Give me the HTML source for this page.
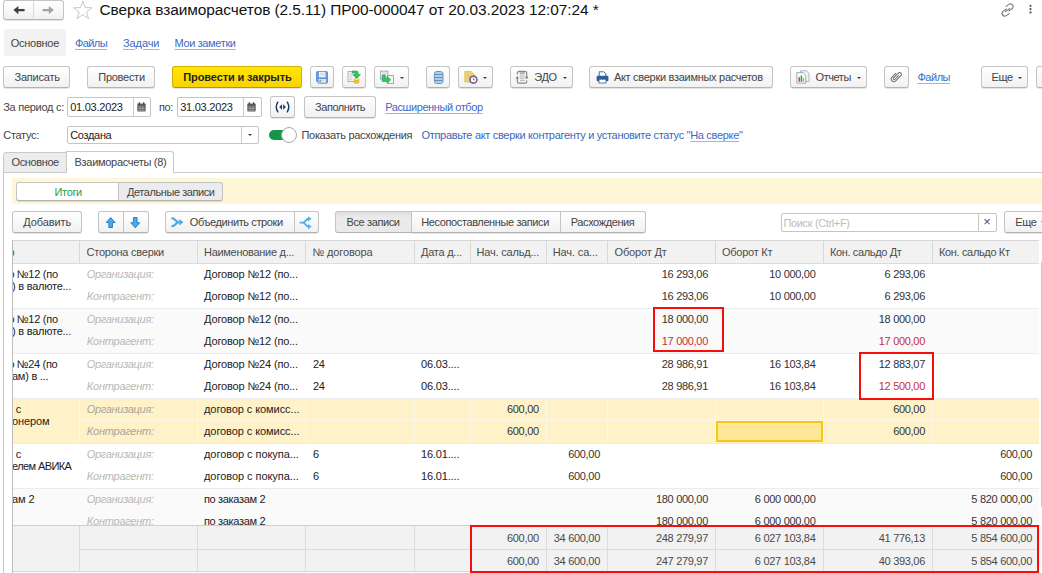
<!DOCTYPE html>
<html lang="ru"><head><meta charset="utf-8"><title>Сверка взаиморасчетов</title>
<style>
*{box-sizing:border-box;margin:0;padding:0}
html,body{width:1042px;height:573px;overflow:hidden;background:#fff}
body{position:relative;font-family:"Liberation Sans",sans-serif;font-size:11px;line-height:12px;color:#444;letter-spacing:-0.35px}
.a{position:absolute;white-space:nowrap}
.t{position:absolute;white-space:nowrap;height:12px}
.btn{position:absolute;height:22px;border:1px solid #c4c4c4;border-bottom-color:#b3b3b3;border-radius:3px;background:linear-gradient(#fff,#f1f1f1);box-shadow:0 1px 0 rgba(0,0,0,.10)}
.lnk{color:#3d6ac4;text-decoration:underline;text-decoration-color:rgba(61,106,196,.5);text-decoration-thickness:1px;text-underline-offset:1.5px}
.inp{position:absolute;height:20px;border:1px solid #c4c4c4;border-radius:2px;background:#fff}
.n{position:absolute;white-space:nowrap;height:12px;text-align:right;width:120px;letter-spacing:-0.3px;color:#333}
.it{font-style:italic;color:#b8b8b8}
.red{color:#c8303a}
.ft{color:#4a4a4a}
.dk{color:#222}
.hd{color:#4c4c4c}
.tri{position:absolute;width:0;height:0;border-style:solid;border-width:2px 2px 0 2px;border-color:#3a3a3a transparent transparent transparent}
.vl{position:absolute;width:1px;background:#e3e3e3}
.clip{position:absolute;overflow:hidden;height:12px;white-space:nowrap}
</style></head><body>
<div class="btn" style="left:3px;top:0px;width:61px;height:20px;"></div>
<div class="a" style="left:33px;top:1px;width:1px;height:18px;background:#d9d9d9"></div>
<svg class="a" style="left:3px;top:0px" width="62" height="21" viewBox="0 0 62 21"><path d="M10.4 10.1 L15.4 6 V9 H21.6 V11.2 H15.4 V14.2 Z" fill="#3f3f3f"/><path d="M50.8 10.1 L45.8 6 V9 H39.6 V11.2 H45.8 V14.2 Z" fill="#a3a3a3"/></svg>
<svg class="a" style="left:0;top:0" width="100" height="24"><polygon points="82.8,1.0 85.1,7.6 92.1,7.8 86.5,12.0 88.6,18.7 82.8,14.7 77.0,18.7 79.1,12.0 73.5,7.8 80.5,7.6" fill="#fff" stroke="#c2cad3" stroke-width="1"/></svg>
<div class="t " style="left:99.5px;top:-0.1px;font-size:15.4px;line-height:20px;height:20px;color:#111;letter-spacing:-0.05px">Сверка взаиморасчетов (2.5.11) ПР00-000047 от 20.03.2023 12:07:24 *</div>
<svg class="a" style="left:998px;top:0px" width="44" height="20" viewBox="0 0 44 20"><g fill="none" stroke="#777" stroke-width="1.1" stroke-linecap="round"><path d="M8.4 9 L5.3 11.1 a2.7 2.7 0 0 0 3 4.5 L11.2 13.6"/><path d="M9.4 11 L12.5 8.9 a2.7 2.7 0 0 0 -3 -4.5 L6.6 6.4" transform="translate(1.4,0)"/><path d="M7.4 11.6 L11.8 8.4"/></g><g fill="#555"><circle cx="32.5" cy="5.8" r="1.1"/><circle cx="32.5" cy="9.1" r="1.1"/><circle cx="32.5" cy="12.4" r="1.1"/></g></svg>
<div class="a" style="left:3.5px;top:29px;width:62.5px;height:27px;background:#f2f2f2;border-radius:3px"></div>
<div class="t " style="left:10.75px;top:36.5px;letter-spacing:-0.27px">Основное</div>
<div class="t lnk" style="left:75px;top:36.5px;letter-spacing:-0.60px">Файлы</div>
<div class="t lnk" style="left:123px;top:36.5px;letter-spacing:-0.09px">Задачи</div>
<div class="t lnk" style="left:174.5px;top:36.5px;letter-spacing:-0.36px">Мои заметки</div>
<div class="btn" style="left:3px;top:66px;width:67px;"></div>
<div class="t " style="left:14.5px;top:71px;letter-spacing:-0.22px">Записать</div>
<div class="btn" style="left:87px;top:66px;width:68px;"></div>
<div class="t " style="left:98.25px;top:71px;letter-spacing:-0.27px">Провести</div>
<div class="btn" style="left:172px;top:66px;width:130px;background:linear-gradient(#ffe600,#f8d300);border-color:#d4ad00;border-bottom-color:#b99600"></div>
<div class="t dk" style="left:183.25px;top:71px;font-weight:bold;letter-spacing:-0.11px">Провести и закрыть</div>
<div class="btn" style="left:310px;top:66px;width:24px;"></div>
<div class="btn" style="left:342px;top:66px;width:24px;"></div>
<div class="btn" style="left:374px;top:66px;width:35px;"></div>
<div class="btn" style="left:426px;top:66px;width:24px;"></div>
<div class="btn" style="left:458px;top:66px;width:35px;"></div>
<div class="btn" style="left:509.5px;top:66px;width:63px;"></div>
<div class="btn" style="left:589px;top:66px;width:184px;"></div>
<div class="btn" style="left:790px;top:66px;width:77px;"></div>
<div class="btn" style="left:884px;top:66px;width:25px;"></div>
<div class="btn" style="left:981px;top:66px;width:47px;"></div>
<div class="btn" style="left:1035.5px;top:66px;width:20px;"></div>
<svg class="a" style="left:316px;top:71px" width="12" height="13" viewBox="0 0 12 13"><path d="M1.6 0.5 h8.8 a1.2 1.2 0 0 1 1.2 1.2 v9.4 a1.2 1.2 0 0 1 -1.2 1.2 h-7.6 l-2.4 -2.2 v-8.4 a1.2 1.2 0 0 1 1.2 -1.2z" fill="#6397dc" stroke="#4c7fc4" stroke-width=".7"/><rect x="2.9" y="0.9" width="6.6" height="5.4" fill="#f2f6fb"/><path d="M3.8 2.4h4.8M3.8 4h4.8" stroke="#b7cbe6" stroke-width=".8"/><rect x="2.5" y="8" width="7.6" height="3.8" fill="#dfe3e8"/><rect x="3.4" y="8.8" width="1.8" height="2.4" fill="#93a1b3"/></svg>
<svg class="a" style="left:347px;top:70px" width="14" height="14" viewBox="0 0 14 14"><rect x="1" y="1.4" width="7.4" height="10.2" fill="#f4f6f8" stroke="#9aa6b4" stroke-width=".8"/><path d="M2.4 3.8h3M2.4 5.8h3.6M2.4 7.8h3M2.4 9.6h2.4" stroke="#b0bac6" stroke-width=".7"/><path d="M5.2 1 h4 q2 0 2 2 v1.6 h2.2 l-3.7 4 l-3.7 -4 h2.2 v-0.8 q0 -0.7 -0.7 -0.7 h-2.3z" fill="#2ec866" stroke="#1c9a48" stroke-width=".6" stroke-linejoin="round"/><path d="M7 9.6 v2.9 c0 1.4 5 1.4 5 0 v-2.9z" fill="#ecc43a" stroke="#cfa21c" stroke-width=".4"/><ellipse cx="9.5" cy="9.6" rx="2.5" ry="1" fill="#f9e58a" stroke="#cfa21c" stroke-width=".5"/></svg>
<svg class="a" style="left:380px;top:70px" width="14" height="14" viewBox="0 0 14 14"><rect x="0.5" y="1.1" width="7.4" height="8" fill="#eef1f5" stroke="#8f9bab" stroke-width=".8"/><path d="M2 3h4.4M2 4.8h4.4" stroke="#b8c2ce" stroke-width=".6"/><rect x="7.6" y="5.6" width="6" height="8" fill="#f7f9fb" stroke="#8f9bab" stroke-width=".8"/><path d="M2.2 5 h3 v3.2 h2 v-1.9 l3.4 3.5 l-3.4 3.5 v-1.9 h-5z" fill="#2ec866" stroke="#1c9a48" stroke-width=".6" stroke-linejoin="round"/></svg>
<div class="tri" style="left:399.5px;top:76.5px;"></div>
<svg class="a" style="left:433px;top:71px" width="11" height="13" viewBox="0 0 11 13"><rect x="1.4" y="0.5" width="8.6" height="12" rx="2.4" fill="#b3cfe8" stroke="#5f8db8" stroke-width=".9"/><path d="M1.6 3.5h8.2M1.6 6.5h8.2M1.6 9.5h8.2" stroke="#5f8db8" stroke-width="1"/></svg>
<svg class="a" style="left:464px;top:70px" width="14" height="14" viewBox="0 0 14 14"><path d="M0.8 1.4 h6.2 l3.4 3.2 v7.4 h-9.6z" fill="#efd57a" stroke="#dcb955" stroke-width=".8"/><path d="M2.4 4h3.4M2.4 6h4.4M2.4 8h3" stroke="#dfc060" stroke-width=".8"/><circle cx="9.4" cy="9.7" r="3.4" fill="#fff" stroke="#3a72c4" stroke-width="1.4"/><circle cx="9.4" cy="9.7" r="3.4" fill="none" stroke="#e0453a" stroke-width="1.4" stroke-dasharray="2.2 3.14" stroke-dashoffset="1.1"/><path d="M9.4 7.9 v1.9 h1.5" fill="none" stroke="#d9483b" stroke-width=".9"/></svg>
<div class="tri" style="left:483px;top:76.5px;"></div>
<svg class="a" style="left:515px;top:70px" width="14" height="15" viewBox="0 0 14 15"><g fill="none" stroke="#858585" stroke-width="1.2" stroke-linecap="round"><path d="M2.3 7.4 V11.4 Q2.3 13.2 4.2 13.2 H9.8 Q11.7 13.2 11.7 11.4 V10.8"/><path d="M11.7 7.6 V3.2 Q11.7 1.4 9.8 1.4 H4.2 Q2.3 1.4 2.3 3.2 V4"/></g><path d="M0.5 8.4 L2.3 6 L4.1 8.4z" fill="#808080"/><path d="M9.9 6.8 L11.7 9.2 L13.5 6.8z" fill="#808080"/><path d="M4.6 3.1h5.2" stroke="#9a9a9a" stroke-width="1.5"/><path d="M4.8 5.1h4.8M4.8 6.9h4.8M4.8 8.7h4.8M4.8 10.5h4.8" stroke="#a8a8a8" stroke-width=".8"/></svg>
<div class="t " style="left:534.3px;top:71px;letter-spacing:-0.35px">ЭДО</div>
<div class="tri" style="left:563px;top:76.5px;"></div>
<svg class="a" style="left:595.5px;top:71px" width="13" height="13" viewBox="0 0 13 13"><path d="M3.2 0.8 h4.6 l2 2 v3 h-6.6z" fill="#fff" stroke="#2f5f94" stroke-width=".9"/><rect x="0.6" y="4.8" width="11.8" height="5.4" rx="1.2" fill="#2f5f94"/><rect x="3" y="8.2" width="7" height="3.8" fill="#fff" stroke="#2f5f94" stroke-width=".8"/></svg>
<div class="t " style="left:613.9px;top:71px;letter-spacing:-0.29px">Акт сверки взаимных расчетов</div>
<svg class="a" style="left:796px;top:70px" width="15" height="14" viewBox="0 0 15 14"><path d="M4.4 0.8 h6 l2.6 2.6 v8 h-8.6z" fill="#f3f5f7" stroke="#9aa3ad" stroke-width=".8"/><path d="M0.8 2.6 h6.4 l2.6 2.6 v8 h-9z" fill="#fafbfc" stroke="#8f99a5" stroke-width=".8"/><rect x="2.4" y="7.2" width="1.6" height="4.6" fill="#d9483b"/><rect x="4.6" y="5.6" width="1.6" height="6.2" fill="#3aa54d"/><rect x="6.8" y="8.2" width="1.4" height="3.6" fill="#e0a030"/></svg>
<div class="t " style="left:815.5px;top:71px;letter-spacing:-0.43px">Отчеты</div>
<div class="tri" style="left:857px;top:76.5px;"></div>
<svg class="a" style="left:889px;top:70px" width="14" height="14" viewBox="0 0 14 14"><g transform="translate(7.2 6.7) rotate(45) scale(1.22) translate(-2.15 -5.3)" fill="none" stroke="#6a6a6a" stroke-width=".78" stroke-linecap="round"><path d="M2.9 3.4 V7.5 a0.8 0.8 0 0 1 -1.6 0 V2 a1.5 1.5 0 0 1 3 0 V8 a2.15 2.15 0 0 1 -4.3 0 V3.6"/></g></svg>
<div class="t lnk" style="left:917.5px;top:71px;letter-spacing:-0.49px">Файлы</div>
<div class="t " style="left:991.4px;top:71px;letter-spacing:-0.35px">Еще</div>
<div class="tri" style="left:1018px;top:76.5px;"></div>
<div class="t " style="left:3.25px;top:101px;letter-spacing:-0.28px">За период с:</div>
<div class="inp" style="left:67px;top:97px;width:84px;"></div>
<div class="t dk" style="left:70.25px;top:101px;letter-spacing:-0.26px">01.03.2023</div>
<div class="t " style="left:159px;top:101px;letter-spacing:-0.35px">по:</div>
<div class="inp" style="left:177px;top:97px;width:85px;"></div>
<div class="t dk" style="left:180.2px;top:101px;letter-spacing:-0.25px">31.03.2023</div>
<svg class="a" style="left:137px;top:102px" width="9" height="10" viewBox="0 0 9 10"><rect x="0.3" y="1.4" width="8.4" height="8" rx="1" fill="#5e5e5e"/><path d="M2.3 0.2v2.2M6.7 0.2v2.2" stroke="#444" stroke-width="1.2"/><path d="M1.6 5h5.8M1.6 6.6h5.8M1.6 8.2h5.8" stroke="#d5d5d5" stroke-width=".8" stroke-dasharray="1.1 .5"/></svg>
<svg class="a" style="left:247px;top:102px" width="9" height="10" viewBox="0 0 9 10"><rect x="0.3" y="1.4" width="8.4" height="8" rx="1" fill="#5e5e5e"/><path d="M2.3 0.2v2.2M6.7 0.2v2.2" stroke="#444" stroke-width="1.2"/><path d="M1.6 5h5.8M1.6 6.6h5.8M1.6 8.2h5.8" stroke="#d5d5d5" stroke-width=".8" stroke-dasharray="1.1 .5"/></svg>
<div class="a" style="left:133px;top:98px;width:1px;height:18px;background:#cdcdcd"></div>
<div class="a" style="left:243px;top:98px;width:1px;height:18px;background:#cdcdcd"></div>
<div class="btn" style="left:270px;top:96px;width:25px;"></div>
<svg class="a" style="left:270px;top:96px" width="25" height="22" viewBox="0 0 25 22"><g fill="none" stroke="#1f3f6e" stroke-width="1.5" stroke-linecap="round"><path d="M7.8 6.2 q-3 4.8 0 9.6"/><path d="M17.3 6.2 q3 4.8 0 9.6"/></g><path d="M12 8.3 L9.2 11 L12 13.7z M13.1 8.3 L15.9 11 L13.1 13.7z" fill="#1f3f6e"/></svg>
<div class="btn" style="left:304px;top:96px;width:72px;"></div>
<div class="t " style="left:315px;top:101px;letter-spacing:-0.44px">Заполнить</div>
<div class="t lnk" style="left:385.25px;top:101px;letter-spacing:-0.42px">Расширенный отбор</div>
<div class="t " style="left:3.25px;top:129px;letter-spacing:-0.31px">Статус:</div>
<div class="inp" style="left:67px;top:125.5px;width:192px;height:18px;"></div>
<div class="t dk" style="left:70.25px;top:129px;letter-spacing:-0.33px">Создана</div>
<div class="a" style="left:241px;top:126.5px;width:1px;height:16px;background:#cdcdcd"></div>
<div class="tri" style="left:247.5px;top:134px;"></div>
<div class="a" style="left:269px;top:130px;width:26px;height:10px;border-radius:5px;background:#14964a"></div>
<div class="a" style="left:281px;top:127px;width:16px;height:16px;border-radius:8px;background:#fff;border:1px solid #a9a9a9"></div>
<div class="t " style="left:301.5px;top:129px;letter-spacing:-0.32px">Показать расхождения</div>
<div class="t " style="left:421.5px;top:129px;color:#3a68c0;letter-spacing:-0.32px">Отправьте акт сверки контрагенту и установите статус "<span class="lnk">На сверке</span>"</div>
<div class="a" style="left:3px;top:172px;width:1045px;height:410px;border:1px solid #c9c9c9;border-right:0"></div>
<div class="a" style="left:3px;top:151.5px;width:64px;height:21.5px;border:1px solid #c9c9c9;border-radius:3px 0 0 0;background:#ececec"></div>
<div class="a" style="left:66px;top:151px;width:108px;height:22px;border:1px solid #c9c9c9;border-bottom:0;border-radius:0 3px 0 0;background:#fff"></div>
<div class="t " style="left:11.5px;top:155.5px;letter-spacing:-0.38px">Основное</div>
<div class="t " style="left:74.5px;top:155.5px;letter-spacing:-0.29px">Взаиморасчеты (8)</div>
<div class="a" style="left:12px;top:177.5px;width:1030px;height:26.5px;background:#fef7d7"></div>
<div class="btn" style="left:16px;top:182px;width:103px;height:19px;border-radius:3px 0 0 3px;background:#fff"></div>
<div class="btn" style="left:118px;top:182px;width:105px;height:19px;border-radius:0 3px 3px 0;background:#ececec"></div>
<div class="t " style="left:54.5px;top:185.5px;color:#22a052;letter-spacing:-0.34px">Итоги</div>
<div class="t " style="left:127px;top:185.5px;letter-spacing:-0.43px">Детальные записи</div>
<div class="btn" style="left:12px;top:211px;width:70px;"></div>
<div class="t " style="left:23.25px;top:216px;letter-spacing:-0.09px">Добавить</div>
<div class="btn" style="left:98px;top:211px;width:26px;border-radius:3px 0 0 3px"></div>
<div class="btn" style="left:123px;top:211px;width:26px;border-radius:0 3px 3px 0"></div>
<svg class="a" style="left:98px;top:211px" width="51" height="22" viewBox="0 0 51 22"><path d="M12.65 6.6 L17.1 11.5 H14.45 V16.5 H10.85 V11.5 H8.2z" fill="#45abf3" stroke="#1d78bc" stroke-width=".9" stroke-linejoin="round"/><path d="M37.25 16.8 L41.7 11.8 H39.05 V6.5 H35.45 V11.8 H32.8z" fill="#45abf3" stroke="#1d78bc" stroke-width=".9" stroke-linejoin="round"/></svg>
<div class="btn" style="left:165px;top:211px;width:130px;border-radius:3px 0 0 3px"></div>
<div class="btn" style="left:294px;top:211px;width:25px;border-radius:0 3px 3px 0"></div>
<svg class="a" style="left:170px;top:216px" width="14" height="12" viewBox="0 0 14 12"><g fill="none" stroke="#4da5e2" stroke-width="2.1" stroke-linecap="round"><path d="M2.2 2.3 C5.4 2.3 5.6 6.2 9 6.2 C5.6 6.2 5.4 10.2 2.2 10.2"/></g><path d="M9.2 3 L13.5 6.2 L9.2 9.4z" fill="#4da5e2"/></svg>
<div class="t " style="left:189.8px;top:216px;letter-spacing:-0.39px">Объединить строки</div>
<svg class="a" style="left:299px;top:215px" width="14" height="15" viewBox="0 0 14 15"><g fill="none" stroke="#5aaee8" stroke-width="1.9" stroke-linecap="round"><path d="M1.3 7.6 H4 C6.6 7.6 6.4 3.8 9.6 3.8"/><path d="M4 7.6 C6.6 7.6 6.4 11.6 9.6 11.6"/></g><path d="M9 1.2 L12.7 3.8 L9 6.4z M9 9 L12.7 11.6 L9 14.2z" fill="#5aaee8"/></svg>
<div class="btn" style="left:335px;top:211px;width:77px;border-radius:3px 0 0 3px;background:linear-gradient(#dedede,#ebebeb 30%,#e9e9e9);box-shadow:none"></div>
<div class="btn" style="left:411px;top:211px;width:150px;border-radius:0"></div>
<div class="btn" style="left:560px;top:211px;width:86px;border-radius:0 3px 3px 0"></div>
<div class="t " style="left:346.5px;top:216px;letter-spacing:-0.38px">Все записи</div>
<div class="t " style="left:421.25px;top:216px;letter-spacing:-0.39px">Несопоставленные записи</div>
<div class="t " style="left:570.75px;top:216px;letter-spacing:-0.40px">Расхождения</div>
<div class="inp" style="left:781px;top:213px;width:198px;height:19px;border-radius:2px 0 0 2px"></div>
<div class="inp" style="left:978px;top:213px;width:19px;height:19px;border-radius:0 2px 2px 0"></div>
<div class="t " style="left:783.5px;top:216.5px;color:#bdbdbd;letter-spacing:-0.36px">Поиск (Ctrl+F)</div>
<div class="t " style="left:983.3px;top:214.5px;font-size:13px;line-height:14px;height:14px;color:#555;">×</div>
<div class="btn" style="left:1004px;top:211px;width:50px;"></div>
<div class="t " style="left:1015.25px;top:216px;letter-spacing:-0.35px">Еще</div>
<div class="tri" style="left:1040.5px;top:221px;"></div>
<div class="a" style="left:12px;top:240px;width:1027px;height:24px;background:#f2f2f2;border-top:1px solid #d6d6d6;border-bottom:1px solid #dcdcdc"></div>
<div class="vl" style="left:79px;top:241px;width:1px;height:22px;background:#d9d9d9"></div>
<div class="t hd" style="left:86.5px;top:246px;letter-spacing:-0.24px">Сторона сверки</div>
<div class="vl" style="left:197px;top:241px;width:1px;height:22px;background:#d9d9d9"></div>
<div class="t hd" style="left:204px;top:246px;letter-spacing:-0.29px">Наименование д...</div>
<div class="vl" style="left:305px;top:241px;width:1px;height:22px;background:#d9d9d9"></div>
<div class="t hd" style="left:312.5px;top:246px;letter-spacing:-0.15px">№ договора</div>
<div class="vl" style="left:414px;top:241px;width:1px;height:22px;background:#d9d9d9"></div>
<div class="t hd" style="left:421px;top:246px;letter-spacing:-0.25px">Дата д...</div>
<div class="vl" style="left:470px;top:241px;width:1px;height:22px;background:#d9d9d9"></div>
<div class="t hd" style="left:476.5px;top:246px;letter-spacing:-0.19px">Нач. сальд...</div>
<div class="vl" style="left:546px;top:241px;width:1px;height:22px;background:#d9d9d9"></div>
<div class="t hd" style="left:552.75px;top:246px;letter-spacing:-0.13px">Нач. са...</div>
<div class="vl" style="left:607px;top:241px;width:1px;height:22px;background:#d9d9d9"></div>
<div class="t hd" style="left:614.5px;top:246px;letter-spacing:-0.16px">Оборот Дт</div>
<div class="vl" style="left:715px;top:241px;width:1px;height:22px;background:#d9d9d9"></div>
<div class="t hd" style="left:722px;top:246px;letter-spacing:-0.25px">Оборот Кт</div>
<div class="vl" style="left:823px;top:241px;width:1px;height:22px;background:#d9d9d9"></div>
<div class="t hd" style="left:830px;top:246px;letter-spacing:-0.37px">Кон. сальдо Дт</div>
<div class="vl" style="left:932px;top:241px;width:1px;height:22px;background:#d9d9d9"></div>
<div class="t hd" style="left:939px;top:246px;letter-spacing:-0.35px">Кон. сальдо Кт</div>
<div class="clip hd" style="left:13px;top:246px;width:2px"><span style="margin-left:-4.5px">р</span></div>
<div class="a" style="left:13px;top:264px;width:1026px;height:45px;background:#fff;border-bottom:1px solid #ececec"></div>
<div class="clip dk" style="left:13px;top:268px;width:2px"><span style="margin-left:-4.5px">о</span></div>
<div class="t dk" style="left:16.8px;top:268px;letter-spacing:-0.27px">№12 (по</div>
<div class="t dk" style="left:12px;top:280px;letter-spacing:-0.24px">) в валюте...</div>
<div class="t it" style="left:86.8px;top:268px;letter-spacing:-0.32px">Организация:</div>
<div class="t dk" style="left:204px;top:268px;letter-spacing:-0.15px">Договор №12 (по...</div>
<div class="n " style="left:588px;top:268px">16 293,06</div>
<div class="n " style="left:695.5px;top:268px">10 000,00</div>
<div class="n " style="left:805px;top:268px">6 293,06</div>
<div class="t it" style="left:86.8px;top:290px;letter-spacing:-0.24px">Контрагент:</div>
<div class="t dk" style="left:204px;top:290px;letter-spacing:-0.15px">Договор №12 (по...</div>
<div class="n " style="left:588px;top:290px">16 293,06</div>
<div class="n " style="left:695.5px;top:290px">10 000,00</div>
<div class="n " style="left:805px;top:290px">6 293,06</div>
<div class="a" style="left:13px;top:309px;width:1026px;height:45px;background:#fafafa;border-bottom:1px solid #ececec"></div>
<div class="clip dk" style="left:13px;top:313px;width:2px"><span style="margin-left:-4.5px">о</span></div>
<div class="t dk" style="left:16.8px;top:313px;letter-spacing:-0.27px">№12 (по</div>
<div class="t dk" style="left:12px;top:325px;letter-spacing:-0.24px">) в валюте...</div>
<div class="t it" style="left:86.8px;top:313px;letter-spacing:-0.32px">Организация:</div>
<div class="t dk" style="left:204px;top:313px;letter-spacing:-0.15px">Договор №12 (по...</div>
<div class="n " style="left:588px;top:313px">18 000,00</div>
<div class="n " style="left:805px;top:313px">18 000,00</div>
<div class="t it" style="left:86.8px;top:335px;letter-spacing:-0.24px">Контрагент:</div>
<div class="t dk" style="left:204px;top:335px;letter-spacing:-0.15px">Договор №12 (по...</div>
<div class="n red" style="left:588px;top:335px">17 000,00</div>
<div class="n red" style="left:805px;top:335px">17 000,00</div>
<div class="a" style="left:13px;top:354px;width:1026px;height:45px;background:#fff;border-bottom:1px solid #ececec"></div>
<div class="clip dk" style="left:13px;top:358px;width:2px"><span style="margin-left:-4.5px">о</span></div>
<div class="t dk" style="left:16.8px;top:358px;letter-spacing:-0.32px">№24 (по</div>
<div class="t dk" style="left:12px;top:370px;letter-spacing:-0.25px">ам) в ...</div>
<div class="t it" style="left:86.8px;top:358px;letter-spacing:-0.32px">Организация:</div>
<div class="t dk" style="left:204px;top:358px;letter-spacing:-0.15px">Договор №24 (по...</div>
<div class="t dk" style="left:313px;top:358px;letter-spacing:-0.35px">24</div>
<div class="t dk" style="left:421px;top:358px;letter-spacing:-0.16px">06.03....</div>
<div class="n " style="left:588px;top:358px">28 986,91</div>
<div class="n " style="left:695.5px;top:358px">16 103,84</div>
<div class="n " style="left:805px;top:358px">12 883,07</div>
<div class="t it" style="left:86.8px;top:380px;letter-spacing:-0.24px">Контрагент:</div>
<div class="t dk" style="left:204px;top:380px;letter-spacing:-0.15px">Договор №24 (по...</div>
<div class="t dk" style="left:313px;top:380px;letter-spacing:-0.35px">24</div>
<div class="t dk" style="left:421px;top:380px;letter-spacing:-0.16px">06.03....</div>
<div class="n " style="left:588px;top:380px">28 986,91</div>
<div class="n " style="left:695.5px;top:380px">16 103,84</div>
<div class="n red" style="left:805px;top:380px">12 500,00</div>
<div class="a" style="left:13px;top:399px;width:1026px;height:45px;background:#fff2c8;border-bottom:1px solid #ececec"></div>
<div class="vl" style="left:79px;top:399px;width:1px;height:44px;background:#fcf8e8"></div>
<div class="vl" style="left:197px;top:399px;width:1px;height:44px;background:#fcf8e8"></div>
<div class="vl" style="left:305px;top:399px;width:1px;height:44px;background:#fcf8e8"></div>
<div class="vl" style="left:414px;top:399px;width:1px;height:44px;background:#fcf8e8"></div>
<div class="vl" style="left:470px;top:399px;width:1px;height:44px;background:#fcf8e8"></div>
<div class="vl" style="left:546px;top:399px;width:1px;height:44px;background:#fcf8e8"></div>
<div class="vl" style="left:607px;top:399px;width:1px;height:44px;background:#fcf8e8"></div>
<div class="vl" style="left:715px;top:399px;width:1px;height:44px;background:#fcf8e8"></div>
<div class="vl" style="left:823px;top:399px;width:1px;height:44px;background:#fcf8e8"></div>
<div class="vl" style="left:932px;top:399px;width:1px;height:44px;background:#fcf8e8"></div>
<div class="a" style="left:80px;top:419.5px;width:959px;height:1px;background:#fcf8e8"></div>
<div class="t dk" style="left:15.8px;top:403px;">с</div>
<div class="t dk" style="left:12px;top:415px;letter-spacing:-0.12px">онером</div>
<div class="t it" style="left:86.8px;top:403px;color:#aaa698;letter-spacing:-0.32px">Организация:</div>
<div class="t dk" style="left:204px;top:403px;letter-spacing:-0.08px">договор с комисс...</div>
<div class="n " style="left:418.8px;top:403px">600,00</div>
<div class="n " style="left:805px;top:403px">600,00</div>
<div class="t it" style="left:86.8px;top:425px;color:#aaa698;letter-spacing:-0.24px">Контрагент:</div>
<div class="t dk" style="left:204px;top:425px;letter-spacing:-0.08px">договор с комисс...</div>
<div class="n " style="left:418.8px;top:425px">600,00</div>
<div class="n " style="left:805px;top:425px">600,00</div>
<div class="a" style="left:13px;top:444px;width:1026px;height:45px;background:#fff;border-bottom:1px solid #ececec"></div>
<div class="t dk" style="left:15.8px;top:448px;">с</div>
<div class="t dk" style="left:12px;top:460px;letter-spacing:-0.59px">елем АВИКА</div>
<div class="t it" style="left:86.8px;top:448px;letter-spacing:-0.32px">Организация:</div>
<div class="t dk" style="left:204px;top:448px;letter-spacing:-0.05px">договор с покупа...</div>
<div class="t dk" style="left:313px;top:448px;">6</div>
<div class="t dk" style="left:421px;top:448px;letter-spacing:-0.16px">16.01....</div>
<div class="n " style="left:480px;top:448px">600,00</div>
<div class="n " style="left:912px;top:448px">600,00</div>
<div class="t it" style="left:86.8px;top:470px;letter-spacing:-0.24px">Контрагент:</div>
<div class="t dk" style="left:204px;top:470px;letter-spacing:-0.05px">договор с покупа...</div>
<div class="t dk" style="left:313px;top:470px;">6</div>
<div class="t dk" style="left:421px;top:470px;letter-spacing:-0.16px">16.01....</div>
<div class="n " style="left:480px;top:470px">600,00</div>
<div class="n " style="left:912px;top:470px">600,00</div>
<div class="a" style="left:13px;top:489px;width:1026px;height:45px;background:#fafafa;border-bottom:1px solid #ececec"></div>
<div class="t dk" style="left:12px;top:493px;letter-spacing:-0.05px">ам 2</div>
<div class="t it" style="left:86.8px;top:493px;letter-spacing:-0.32px">Организация:</div>
<div class="t dk" style="left:204px;top:493px;letter-spacing:-0.34px">по заказам 2</div>
<div class="n " style="left:588px;top:493px">180 000,00</div>
<div class="n " style="left:695.5px;top:493px">6 000 000,00</div>
<div class="n " style="left:912px;top:493px">5 820 000,00</div>
<div class="t it" style="left:86.8px;top:515px;letter-spacing:-0.24px">Контрагент:</div>
<div class="t dk" style="left:204px;top:515px;letter-spacing:-0.34px">по заказам 2</div>
<div class="n " style="left:588px;top:515px">180 000,00</div>
<div class="n " style="left:695.5px;top:515px">6 000 000,00</div>
<div class="n " style="left:912px;top:515px">5 820 000,00</div>
<div class="a" style="left:716px;top:421px;width:107px;height:21px;background:#fee796;border:2px solid #f9c616"></div>
<div class="a" style="left:12px;top:525px;width:1028px;height:47px;background:#f2f2f2;border-top:1px solid #cfcfcf;border-bottom:1px solid #d9d9d9"></div>
<div class="a" style="left:80px;top:549px;width:959px;height:1px;background:#dcdcdc"></div>
<div class="vl" style="left:79px;top:526px;width:1px;height:45px;background:#dcdcdc"></div>
<div class="vl" style="left:197px;top:526px;width:1px;height:45px;background:#dcdcdc"></div>
<div class="vl" style="left:305px;top:526px;width:1px;height:45px;background:#dcdcdc"></div>
<div class="vl" style="left:414px;top:526px;width:1px;height:45px;background:#dcdcdc"></div>
<div class="vl" style="left:470px;top:526px;width:1px;height:45px;background:#dcdcdc"></div>
<div class="vl" style="left:546px;top:526px;width:1px;height:45px;background:#dcdcdc"></div>
<div class="vl" style="left:607px;top:526px;width:1px;height:45px;background:#dcdcdc"></div>
<div class="vl" style="left:715px;top:526px;width:1px;height:45px;background:#dcdcdc"></div>
<div class="vl" style="left:823px;top:526px;width:1px;height:45px;background:#dcdcdc"></div>
<div class="vl" style="left:932px;top:526px;width:1px;height:45px;background:#dcdcdc"></div>
<div class="n ft" style="left:418.8px;top:531.5px">600,00</div>
<div class="n ft" style="left:480px;top:531.5px">34 600,00</div>
<div class="n ft" style="left:588px;top:531.5px">248 279,97</div>
<div class="n ft" style="left:695.5px;top:531.5px">6 027 103,84</div>
<div class="n ft" style="left:805px;top:531.5px">41 776,13</div>
<div class="n ft" style="left:912px;top:531.5px">5 854 600,00</div>
<div class="n ft" style="left:418.8px;top:554.5px">600,00</div>
<div class="n ft" style="left:480px;top:554.5px">34 600,00</div>
<div class="n ft" style="left:588px;top:554.5px">247 279,97</div>
<div class="n ft" style="left:695.5px;top:554.5px">6 027 103,84</div>
<div class="n ft" style="left:805px;top:554.5px">40 393,06</div>
<div class="n ft" style="left:912px;top:554.5px">5 854 600,00</div>
<div class="a" style="left:12px;top:240px;width:1px;height:333px;background:#bdbdbd"></div>
<div class="a" style="left:1040.5px;top:262px;width:1.5px;height:245px;background:#cbcbcb"></div>
<div class="a" style="left:653px;top:307px;width:71px;height:45px;border:2px solid #f80d0d"></div>
<div class="a" style="left:859px;top:352px;width:75px;height:48px;border:2px solid #f80d0d"></div>
<div class="a" style="left:470px;top:525px;width:569px;height:48px;border:2px solid #f80d0d"></div>
</body></html>
